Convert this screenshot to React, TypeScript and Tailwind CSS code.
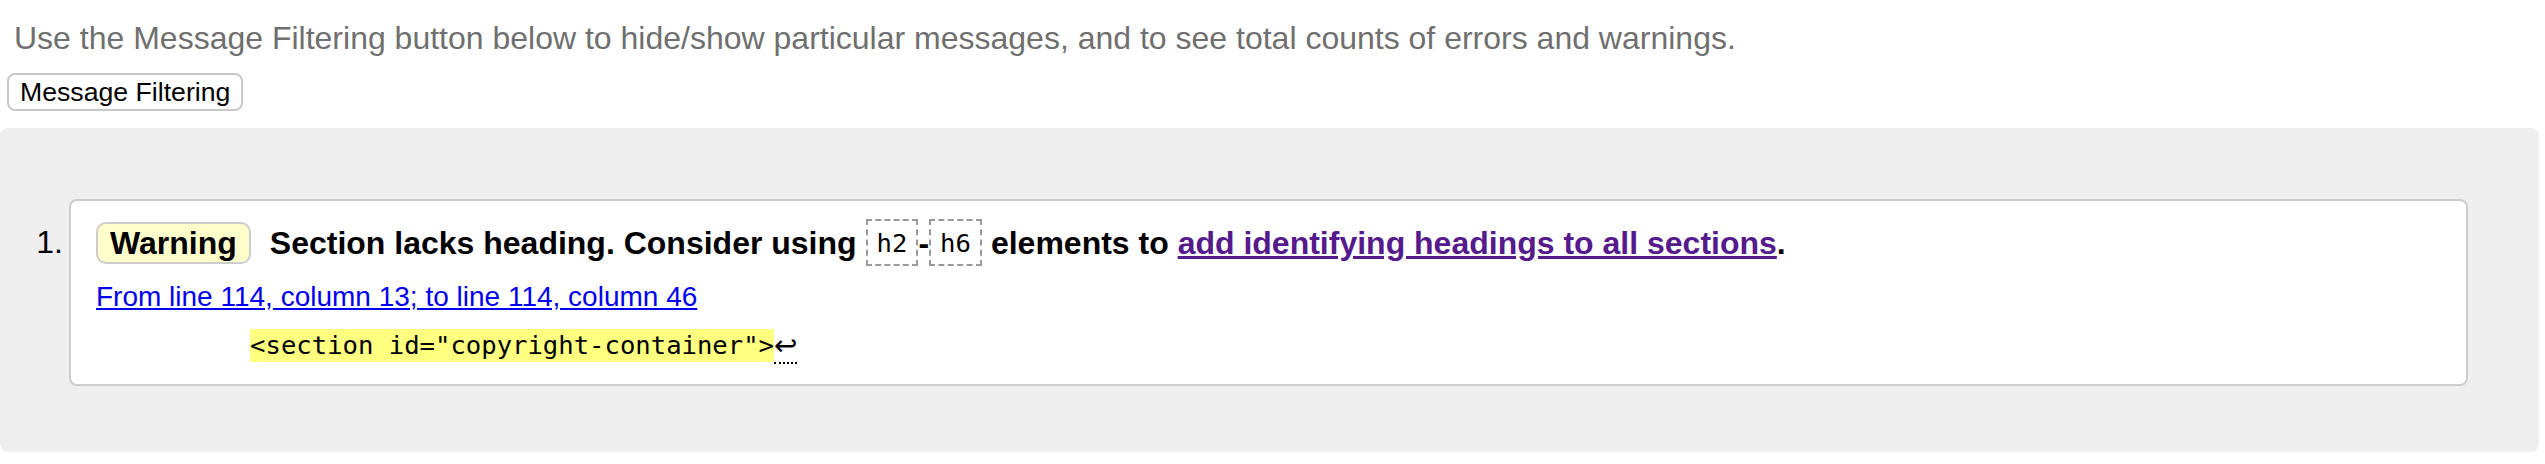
export default function App() {
  const sans = { fontFamily: '"Liberation Sans", Arial, sans-serif' };
  const mono = { fontFamily: '"DejaVu Sans Mono", "Liberation Mono", monospace' };

  return (
    <div className="w-[2545px] h-[464px] bg-white text-black overflow-hidden" style={sans}>
      <p className="pt-[20px] pl-[14px] text-[32px] leading-[36px] text-[#6f6f6f]">
        Use the Message Filtering button below to hide/show particular messages, and to see total counts of errors and warnings.
      </p>
      <button
        type="button"
        className="mt-[17px] ml-[7px] h-[38px] px-[11px] border-2 border-[#c8c8c8] rounded-[8px] bg-white text-[26.67px] leading-[34px] text-black"
        style={sans}
      >
        Message Filtering
      </button>

      <div className="mt-[17px] mr-[6px] bg-[#eeeeee] rounded-[8px] pt-[71px] pr-[71px] pb-[66px] flex">
        <div className="w-[69px] shrink-0 pr-[6px] pt-[24px] text-right text-[32px] leading-[38px]">1.</div>

        <div className="flex-1 bg-white border-2 border-[#cccccc] rounded-[8px] pl-[25px] pt-[18px] pb-[20px]">
          <div className="flex items-center h-[47px] text-[32px] font-bold leading-[38px]">
            <span className="h-[42px] px-[12px] border-2 border-[#cccccc] rounded-[10px] bg-[#ffffcc] flex items-center">
              Warning
            </span>
            <span className="ml-[19px]">Section lacks heading. Consider using</span>
            <code
              className="ml-[9px] h-[47px] px-[9px] border-2 border-dashed border-[#999999] flex items-center text-[25.6px] font-normal"
              style={mono}
            >
              h2
            </code>
            <span>-</span>
            <code
              className="h-[47px] px-[9px] border-2 border-dashed border-[#999999] flex items-center text-[25.6px] font-normal"
              style={mono}
            >
              h6
            </code>
            <span className="ml-[9px]">elements to&nbsp;</span>
            <a href="#" className="text-[#551a8b] underline">add identifying headings to all sections</a>
            <span>.</span>
          </div>

          <div className="mt-[15px] text-[28px] leading-[32px]">
            <a href="#" className="text-[#0000ee] underline">From line 114, column 13; to line 114, column 46</a>
          </div>

          <div className="mt-[16px] h-[35px] text-[25.6px] leading-[33px] whitespace-pre flex items-start" style={mono}>
            <span>{'          '}</span>
            <span className="bg-[#ffff80] h-[33px]">{'<section id="copyright-container">'}</span>
            <span
              className="h-[35px] border-b-2 border-dotted border-black text-[28px] leading-[33px]"
              style={{ fontFamily: '"DejaVu Sans", sans-serif' }}
            >
              ↩
            </span>
          </div>
        </div>
      </div>
    </div>
  );
}
